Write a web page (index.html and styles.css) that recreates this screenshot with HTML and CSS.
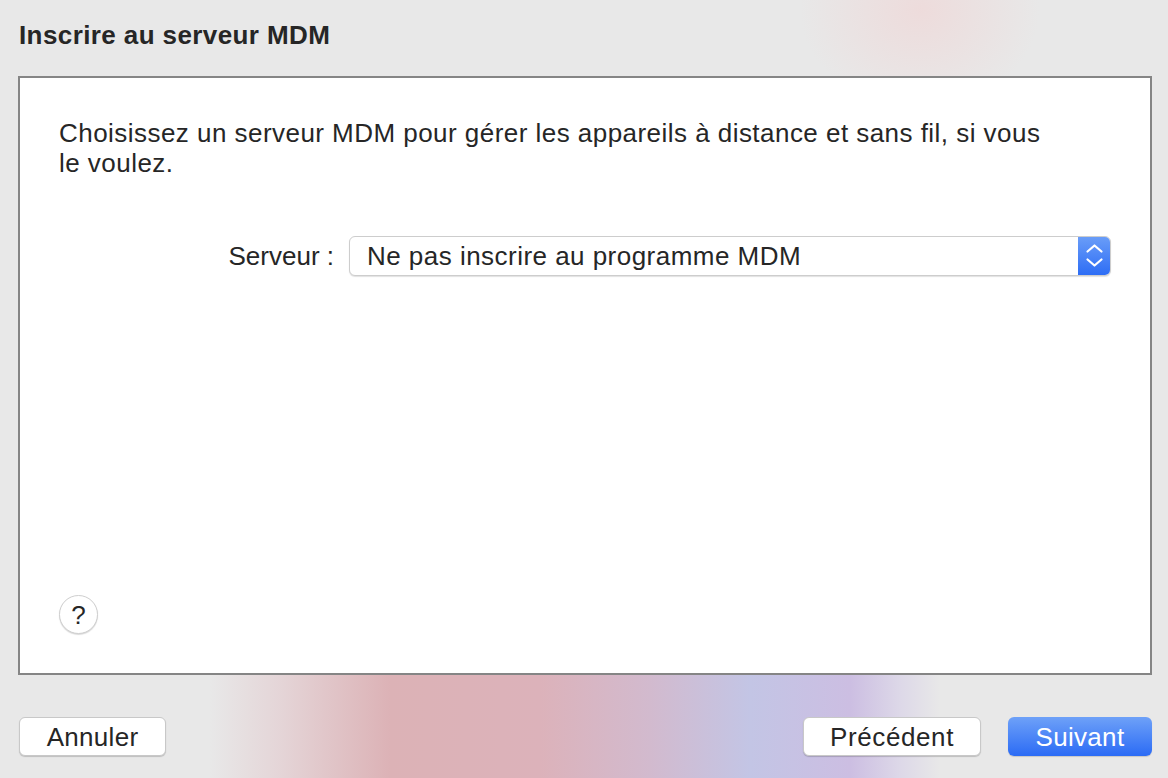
FILE: index.html
```html
<!DOCTYPE html>
<html lang="fr">
<head>
<meta charset="utf-8">
<title>Inscrire au serveur MDM</title>
<link rel="stylesheet" href="styles.css">
</head>
<body>
<div class="window">
  <header class="header">
    <h1 class="title">Inscrire au serveur MDM</h1>
  </header>
  <main class="panel">
    <p class="intro">Choisissez un serveur MDM pour gérer les appareils à distance et sans fil, si vous<br>le voulez.</p>
    <div class="field">
      <span class="label">Serveur :</span>
      <div class="popup">
        <span class="popup-text">Ne pas inscrire au programme MDM</span>
        <span class="stepper">
          <svg width="33" height="40" viewBox="0 0 33 40" aria-hidden="true">
            <path d="M9.5 15.5 L16.5 9.5 L23.5 15.5" fill="none" stroke="#fff" stroke-width="2.2" stroke-linecap="round" stroke-linejoin="round"/>
            <path d="M9.5 23.5 L16.5 29.5 L23.5 23.5" fill="none" stroke="#fff" stroke-width="2.2" stroke-linecap="round" stroke-linejoin="round"/>
          </svg>
        </span>
      </div>
    </div>
    <div class="spacer"></div>
    <button class="help" type="button">?</button>
  </main>
  <footer class="footer">
    <button class="btn btn-cancel" type="button">Annuler</button>
    <div class="right">
      <button class="btn btn-prev" type="button">Précédent</button>
      <button class="btn btn-primary" type="button">Suivant</button>
    </div>
  </footer>
</div>
</body>
</html>
```
FILE: styles.css
```css
html, body {
  margin: 0;
  padding: 0;
}
body {
  width: 1168px;
  height: 778px;
  overflow: hidden;
  font-family: "Liberation Sans", Arial, sans-serif;
  color: #232323;
  background-color: #e8e8e8;
  background-image:
    radial-gradient(ellipse 120px 100px at 920px 10px, rgba(238, 218, 218, 0.9), rgba(238, 218, 218, 0) 100%),
    linear-gradient(90deg,
      rgba(232, 232, 232, 0) 0px,
      rgba(226, 200, 204, 0.6) 70px,
      rgba(220, 178, 182, 1) 180px,
      rgba(220, 178, 186, 1) 330px,
      rgba(210, 186, 206, 1) 440px,
      rgba(195, 197, 229, 1) 540px,
      rgba(204, 190, 226, 1) 640px,
      rgba(218, 212, 232, 0.8) 690px,
      rgba(232, 232, 232, 0) 730px);
  background-size: 100% 100%, 730px 140px;
  background-position: 0 0, 210px 640px;
  background-repeat: no-repeat;
}
.window {
  display: flex;
  flex-direction: column;
  height: 778px;
  padding: 0 16px 0 18px;
  box-sizing: border-box;
}
.header {
  height: 76px;
  box-sizing: border-box;
  padding-top: 22px;
}
.title {
  margin: 0 0 0 1px;
  font-size: 26px;
  line-height: 26px;
  font-weight: bold;
  color: #262626;
  letter-spacing: 0.4px;
}
.panel {
  height: 599px;
  box-sizing: border-box;
  border: 2px solid #858585;
  background: #fff;
  padding: 40px 39px 39px 39px;
  display: flex;
  flex-direction: column;
}
.intro {
  margin: 0;
  font-size: 26px;
  line-height: 30px;
  color: #262626;
  letter-spacing: 0.46px;
}
.field {
  margin-top: 58px;
  display: flex;
  justify-content: flex-end;
  align-items: center;
}
.label {
  font-size: 26px;
  color: #262626;
  margin-right: 15px;
}
.popup {
  width: 762px;
  height: 40px;
  box-sizing: border-box;
  border: 1px solid #cdcdcd;
  border-radius: 6px;
  background: #fff;
  box-shadow: 0 1px 1px rgba(0, 0, 0, 0.12);
  display: flex;
  align-items: stretch;
  overflow: hidden;
}
.popup-text {
  flex: 1;
  display: flex;
  align-items: center;
  padding-left: 17px;
  font-size: 26px;
  color: #262626;
  letter-spacing: 0.47px;
}
.stepper {
  width: 33px;
  display: flex;
  align-items: center;
  justify-content: center;
  background: linear-gradient(#6b9ef8, #2c6cf5);
  margin: -1px -1px -1px 0;
}
.spacer {
  flex: 1;
}
.help {
  width: 39px;
  height: 39px;
  margin-left: 0;
  border-radius: 50%;
  border: 1px solid #cfcfcf;
  background: #fff;
  box-shadow: 0 1px 1px rgba(0, 0, 0, 0.15);
  font-family: "Liberation Sans", Arial, sans-serif;
  font-size: 26px;
  color: #262626;
  padding: 0;
  line-height: 36px;
}
.footer {
  display: flex;
  justify-content: space-between;
  align-items: flex-start;
  padding-top: 42px;
  padding-left: 1px;
}
.right {
  display: flex;
  gap: 27px;
}
.btn {
  height: 39px;
  box-sizing: border-box;
  border: 1px solid #c8c8c8;
  border-radius: 6px;
  background: #fff;
  box-shadow: 0 1px 1px rgba(0, 0, 0, 0.18);
  font-family: "Liberation Sans", Arial, sans-serif;
  font-size: 26px;
  line-height: 36px;
  color: #262626;
  padding: 0;
}
.btn-cancel {
  width: 147px;
  letter-spacing: 0.3px;
}
.btn-prev {
  width: 178px;
  letter-spacing: 0.6px;
}
.btn-primary {
  width: 144px;
  letter-spacing: 0.3px;
  border: none;
  color: #fff;
  background: linear-gradient(#6ea1f8, #2b6bf5);
  box-shadow: 0 1px 1px rgba(0, 0, 0, 0.15);
}
```
